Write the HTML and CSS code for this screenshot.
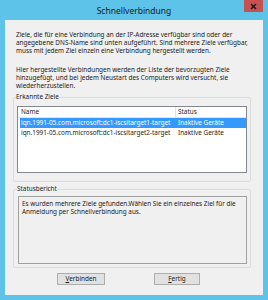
FILE: index.html
```html
<!DOCTYPE html>
<html lang="de">
<head>
    <meta charset="UTF-8">
    <title>Schnellverbindung</title>
    <link rel="stylesheet" href="styles.css">
</head>
<body>
    <div class="window">
        <div class="titlebar">
            <span class="title">Schnellverbindung</span>
            <button class="close" aria-label="Schließen">
                <svg width="7" height="7" viewBox="0 0 7 7"><path d="M1 1L6 6M6 1L1 6" stroke="#1b1b1b" stroke-width="1.6"/></svg>
            </button>
        </div>
        <div class="content">
            <p class="intro">Ziele, die für eine Verbindung an der IP-Adresse verfügbar sind oder der<br>angegebene DNS-Name sind unten aufgeführt. Sind mehrere Ziele verfügbar,<br>muss mit jedem Ziel einzeln eine Verbindung hergestellt werden.</p>
            <p class="intro second">Hier hergestellte Verbindungen werden der Liste der bevorzugten Ziele<br>hinzugefügt, und bei jedem Neustart des Computers wird versucht, sie<br>wiederherzustellen.</p>

            <fieldset class="group targets">
                <legend>Erkannte Ziele</legend>
                <div class="listview">
                    <div class="list-head">
                        <span>Name</span>
                        <span class="col-status">Status</span>
                    </div>
                    <div class="list-row selected">
                        <span>iqn.1991-05.com.microsoft:dc1-iscsitarget1-target</span>
                        <span class="col-status">Inaktive Geräte</span>
                    </div>
                    <div class="list-row">
                        <span>iqn.1991-05.com.microsoft:dc1-iscsitarget2-target</span>
                        <span class="col-status">Inaktive Geräte</span>
                    </div>
                </div>
            </fieldset>

            <fieldset class="group report">
                <legend>Statusbericht</legend>
                <div class="report-box">Es wurden mehrere Ziele gefunden.Wählen Sie ein einzelnes Ziel für die<br>Anmeldung per Schnellverbindung aus.</div>
            </fieldset>

            <div class="buttons">
                <button class="btn btn-connect"><u>V</u>erbinden</button>
                <button class="btn btn-done"><u>F</u>ertig</button>
            </div>
        </div>
    </div>
</body>
</html>
```

FILE: styles.css
```css
body {
    margin: 0;
    background: #5dc3e8;
    font-family: "Noto Sans", sans-serif;
}
.window {
    width: 268px;
    height: 300px;
    background: #5dc3e8;
    display: flex;
    flex-direction: column;
}
.titlebar {
    position: relative;
    height: 20px;
    display: flex;
    align-items: center;
    justify-content: center;
}
.title {
    font-size: 8.5px;
    color: #1a1a1a;
}
.close {
    position: absolute;
    top: 0;
    right: 5px;
    width: 19px;
    height: 12px;
    border: none;
    padding: 0;
    background: #c75050;
    display: flex;
    align-items: center;
    justify-content: center;
}
.content {
    flex: 1;
    margin: 0 5px 5px 5px;
    background: #f0f0f0;
    padding: 11px 12px 0 8px;
    font-size: 6.4px;
    color: #1a1a1a;
    white-space: nowrap;
}
.intro {
    margin: 0 0 0 3px;
    line-height: 8px;
}
.intro.second {
    margin-top: 11px;
}
.group {
    margin: 0;
    border: 1px solid #dcdcdc;
    border-radius: 2px;
    padding: 5px 3px 8px 3px;
}
.group legend {
    padding: 0;
    margin-left: -1px;
    line-height: 8px;
}
.targets {
    margin-top: 3px;
}
.listview {
    height: 65px;
    border: 1px solid #828790;
    background: #fff;
}
.list-head {
    display: grid;
    grid-template-columns: 157px 1fr;
    height: 10px;
    line-height: 10px;
    border-bottom: 1px solid #e5e5e5;
}
.list-head span {
    padding-left: 3px;
}
.list-head .col-status {
    border-left: 1px solid #e5e5e5;
    padding-left: 2px;
}
.list-row {
    display: grid;
    grid-template-columns: 155px 1fr;
    height: 10px;
    line-height: 10px;
    margin-left: 2px;
    padding-left: 1px;
}
.list-row span {
    overflow: hidden;
}
.list-row .col-status {
    padding-left: 2px;
}
.list-row.selected {
    background: #3399ff;
    color: #fff;
}
.report {
    margin-top: 3px;
    padding: 3px 3px 3px 4px;
}
.report-box {
    height: 60px;
    border: 1px solid #a0a0a0;
    padding: 3px 3px;
    line-height: 7.5px;
}
.buttons {
    display: flex;
    gap: 49px;
    margin-top: 5px;
    padding-left: 44px;
}
.btn {
    height: 12px;
    padding: 0;
    border: 1px solid #adadad;
    background: #e1e1e1;
    font-family: "Noto Sans", sans-serif;
    font-size: 6.4px;
    color: #1a1a1a;
    line-height: 10px;
}
.btn-connect {
    width: 48px;
}
.btn-done {
    width: 46px;
}
```
